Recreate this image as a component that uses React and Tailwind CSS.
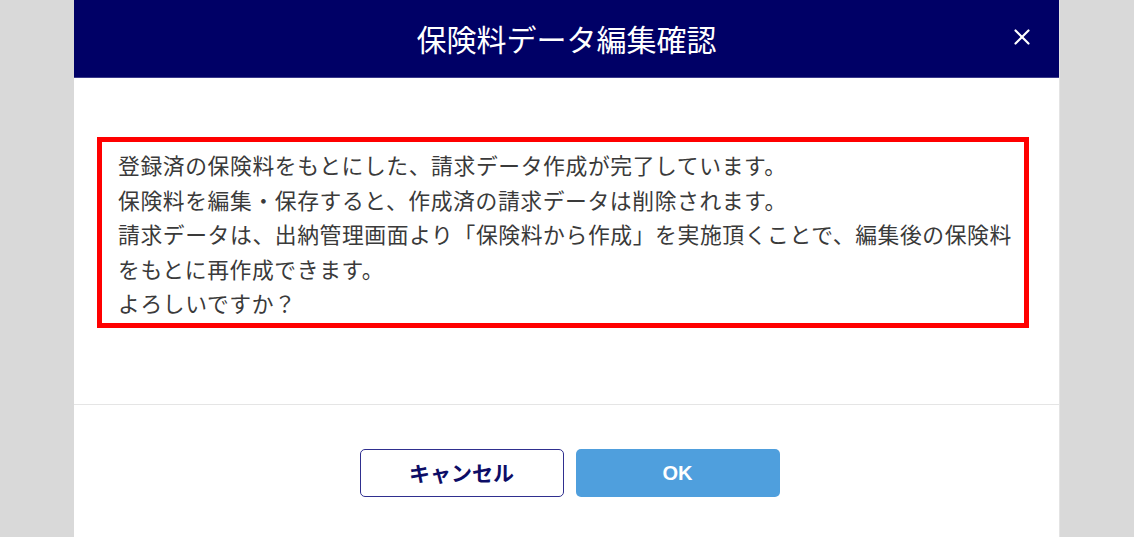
import { X } from "lucide-react";

const jp = "font-['Meiryo','Noto_Sans_CJK_JP',sans-serif]";

export default function App() {
  return (
    <div className={`h-[537px] w-full bg-[#d9d9d9] flex justify-center overflow-hidden ${jp}`}>
      <div className="w-[986px] bg-white flex flex-col border-r border-[#e4e4e4]">
        {/* header */}
        <div className="h-[78px] bg-[#000066] border-b border-[#3a3a8a] flex items-center justify-center relative">
          <h1 className="text-[30px] leading-none text-white tracking-normal -mt-[2px]">
            保険料データ編集確認
          </h1>
          <button className="absolute right-[24px] top-[24px] text-white">
            <X size={26} strokeWidth={2} />
          </button>
        </div>

        {/* body */}
        <div className="h-[326px] pt-[59px] pl-[23px] pr-[30px]">
          <div className="border-[5px] border-[#ff0000] pl-[16px] pt-[6px] pb-[2px] text-[21.8px] leading-[34.5px] tracking-[0.6px] text-[#3a3a3a]">
            <p>登録済の保険料をもとにした、請求データ作成が完了しています。</p>
            <p>保険料を編集・保存すると、作成済の請求データは削除されます。</p>
            <p>請求データは、出納管理画面より「保険料から作成」を実施頂くことで、編集後の保険料</p>
            <p>をもとに再作成できます。</p>
            <p>よろしいですか？</p>
          </div>
        </div>

        {/* footer */}
        <div className="border-t border-[#e5e5e5] pt-[44px] pl-[6px] flex justify-center gap-[12px]">
          <button className="w-[204px] h-[48px] rounded-[5px] border border-[#2f2f8f] text-[#0d0d66] text-[21px] font-bold">
            キャンセル
          </button>
          <button className="w-[204px] h-[48px] rounded-[5px] bg-[#4f9fdd] text-white text-[20px] font-bold font-['Liberation_Sans',sans-serif]">
            OK
          </button>
        </div>
      </div>
    </div>
  );
}
